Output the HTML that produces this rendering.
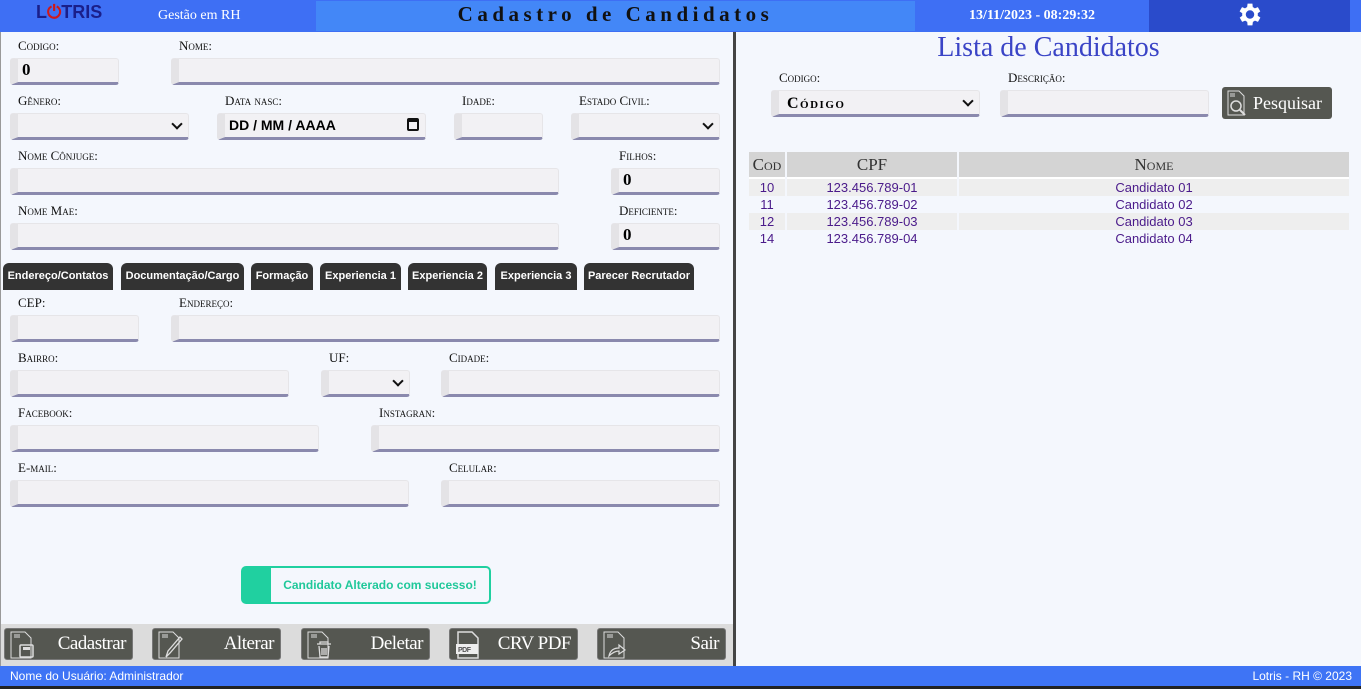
<!DOCTYPE html>
<html><head><meta charset="utf-8"><style>
*{box-sizing:border-box;margin:0;padding:0}
body{width:1361px;height:689px;overflow:hidden;background:#f4f7fd;font-family:"Liberation Serif",serif;position:relative}
.a{position:absolute}
.hdr{left:0;top:0;width:1361px;height:32px;background:#3e6ff4}
.lbl{position:absolute;font-size:13px;font-variant:small-caps;color:#111}
.in{position:absolute;height:27px;background:#f2f1f4;border:1px solid #e6e5e8;border-left:8px solid #e4e3e6;border-bottom:3px solid #8a89ad;border-radius:3px;font-weight:bold;font-size:17px;padding-left:4px;line-height:22px}
.sel::after{content:"";position:absolute;right:7px;top:6px;width:6px;height:6px;border-right:2px solid #111;border-bottom:2px solid #111;transform:rotate(45deg)}
.tab{position:absolute;top:263px;height:27px;background:#333;color:#fff;font-family:"Liberation Sans Narrow","Liberation Sans",sans-serif;font-weight:bold;font-size:11px;line-height:27px;text-align:center;border-radius:6px 6px 0 0}
.btn{position:absolute;top:628px;width:129px;height:32px;background:#555751;border-radius:3px;border:1px solid #777;color:#fff;font-family:"Liberation Serif",serif;font-size:19px;line-height:30px;text-align:right;padding-right:6px;letter-spacing:-0.5px}
.btn svg{position:absolute;left:4px;top:2px}
table{border-collapse:separate;border-spacing:2px 0;font-family:"Liberation Sans Narrow","Liberation Sans",sans-serif;font-size:13px;color:#4a1a8a}
td{text-align:center;height:17px;line-height:17px}
th{background:#d4d4d4;font-family:"Liberation Serif",serif;font-variant:small-caps;font-weight:normal;font-size:17px;color:#333;height:27px;border-bottom:2px solid #fff}
tr.o td{background:#eeeeee}
</style></head><body>
<div class="a hdr"></div>
<div class="a" style="left:316px;top:1px;width:599px;height:30px;background:#4387f7"></div>
<div class="a" style="left:1149px;top:0;width:201px;height:32px;background:#2a4bcb"></div>
<div class="a" style="left:36px;top:2px;font-family:'Liberation Sans',sans-serif;font-weight:bold;font-size:18px;color:#1a1f8a">L<span style="color:#d01818">⏻</span>TRIS</div>
<div class="a" style="left:158px;top:8px;font-size:14px;color:#fff">Gestão em RH</div>
<div class="a" style="left:316px;top:2px;width:599px;text-align:center;font-size:21px;font-weight:bold;letter-spacing:4.5px;color:#111">Cadastro de Candidatos</div>
<div class="a" style="left:915px;top:8px;width:234px;text-align:center;font-size:14px;font-weight:bold;color:#fff">13/11/2023 - 08:29:32</div>
<svg class="a" style="left:1235px;top:0" width="30" height="29" viewBox="0 0 24 24"><path fill="#fff" d="M19.4 13a7.5 7.5 0 000-2l2.1-1.6-2-3.5-2.5 1a7.6 7.6 0 00-1.7-1L15 3h-4l-.4 2.9a7.6 7.6 0 00-1.7 1l-2.5-1-2 3.5L6.6 11a7.5 7.5 0 000 2l-2.1 1.6 2 3.5 2.5-1c.5.4 1.1.7 1.7 1L11 21h4l.4-2.9c.6-.3 1.2-.6 1.7-1l2.5 1 2-3.5zM13 15.5a3.5 3.5 0 110-7 3.5 3.5 0 010 7z" transform="translate(-1 0)"/></svg>
<div class="a" style="left:733px;top:32px;width:3px;height:634px;background:#444"></div>
<div class="a" style="left:0;top:32px;width:1px;height:634px;background:#999"></div>

<div class="lbl" style="left:18px;top:38px">Codigo:</div><div class="in" style="left:10px;top:58px;width:109px">0</div>
<div class="lbl" style="left:179px;top:38px">Nome:</div><div class="in" style="left:171px;top:58px;width:549px"></div>
<div class="lbl" style="left:18px;top:93px">Gênero:</div><div class="in sel" style="left:10px;top:113px;width:179px"></div>
<div class="lbl" style="left:225px;top:93px">Data nasc:</div><div class="in" style="left:217px;top:113px;width:209px;font-family:'Liberation Sans',sans-serif;font-size:14px">DD / MM / AAAA<span style="position:absolute;right:6px;top:4px;width:12px;height:13px;border:2px solid #111;border-top-width:4px;border-radius:2px"></span></div>
<div class="lbl" style="left:462px;top:93px">Idade:</div><div class="in" style="left:454px;top:113px;width:89px"></div>
<div class="lbl" style="left:579px;top:93px">Estado Civil:</div><div class="in sel" style="left:571px;top:113px;width:149px"></div>
<div class="lbl" style="left:18px;top:148px">Nome Cônjuge:</div><div class="in" style="left:10px;top:168px;width:549px"></div>
<div class="lbl" style="left:619px;top:148px">Filhos:</div><div class="in" style="left:611px;top:168px;width:109px">0</div>
<div class="lbl" style="left:18px;top:203px">Nome Mae:</div><div class="in" style="left:10px;top:223px;width:549px"></div>
<div class="lbl" style="left:619px;top:203px">Deficiente:</div><div class="in" style="left:611px;top:223px;width:109px">0</div>

<div class="tab" style="left:3px;width:110px">Endereço/Contatos</div>
<div class="tab" style="left:121px;width:123px">Documentação/Cargo</div>
<div class="tab" style="left:251px;width:62px">Formação</div>
<div class="tab" style="left:320px;width:81px">Experiencia 1</div>
<div class="tab" style="left:408px;width:79px">Experiencia 2</div>
<div class="tab" style="left:495px;width:82px">Experiencia 3</div>
<div class="tab" style="left:584px;width:110px">Parecer Recrutador</div>

<div class="lbl" style="left:18px;top:295px">CEP:</div><div class="in" style="left:10px;top:315px;width:129px"></div>
<div class="lbl" style="left:179px;top:295px">Endereço:</div><div class="in" style="left:171px;top:315px;width:549px"></div>
<div class="lbl" style="left:18px;top:350px">Bairro:</div><div class="in" style="left:10px;top:370px;width:279px"></div>
<div class="lbl" style="left:329px;top:350px">UF:</div><div class="in sel" style="left:321px;top:370px;width:89px"></div>
<div class="lbl" style="left:449px;top:350px">Cidade:</div><div class="in" style="left:441px;top:370px;width:279px"></div>
<div class="lbl" style="left:18px;top:405px">Facebook:</div><div class="in" style="left:10px;top:425px;width:309px"></div>
<div class="lbl" style="left:379px;top:405px">Instagran:</div><div class="in" style="left:371px;top:425px;width:349px"></div>
<div class="lbl" style="left:18px;top:460px">E-mail:</div><div class="in" style="left:10px;top:480px;width:399px"></div>
<div class="lbl" style="left:449px;top:460px">Celular:</div><div class="in" style="left:441px;top:480px;width:279px"></div>

<div class="a" style="left:241px;top:566px;width:250px;height:38px;border:2px solid #20d0a0;border-left:30px solid #20d0a0;border-radius:5px;color:#20c89a;font-family:'Liberation Sans',sans-serif;font-weight:bold;font-size:12px;line-height:34px;text-align:center">Candidato Alterado com sucesso!</div>

<div class="a" style="left:1px;top:624px;width:732px;height:42px;background:#dcdcdc"></div>
<div class="btn" style="left:4px"><svg width="34" height="28" viewBox="0 0 34 28"><path d="M2 1h14l6 6v20H2z" fill="none" stroke="#ddd"/><path d="M5 4h6M5 6h6" stroke="#ddd"/><rect x="11" y="14" width="13" height="12" rx="1" fill="none" stroke="#ddd" stroke-width="1.5"/><rect x="14" y="16" width="7" height="3" fill="#ddd"/></svg>Cadastrar</div>
<div class="btn" style="left:152px"><svg width="34" height="28" viewBox="0 0 34 28"><path d="M2 1h14l6 6v20H2z" fill="none" stroke="#ddd"/><path d="M5 4h6M5 6h6" stroke="#ddd"/><path d="M9 26l2-6 12-14 2 2-12 14z" fill="none" stroke="#ddd" stroke-width="1.3"/></svg>Alterar</div>
<div class="btn" style="left:301px"><svg width="34" height="28" viewBox="0 0 34 28"><path d="M2 1h14l6 6v20H2z" fill="none" stroke="#ddd"/><path d="M5 4h6M5 6h6" stroke="#ddd"/><path d="M11 13h14M14 13v-2h8v2M13 15l1 11h8l1-11M16 17v7M18 17v7M20 17v7" fill="none" stroke="#ddd" stroke-width="1.3"/></svg>Deletar</div>
<div class="btn" style="left:449px"><svg width="34" height="28" viewBox="0 0 34 28"><path d="M4 1h14l6 6v20H4z" fill="none" stroke="#ddd" stroke-width="1.5"/><rect x="2" y="13" width="22" height="10" fill="#eee"/><text x="4" y="21" font-size="7" font-family="Liberation Sans" font-weight="bold" fill="#555">PDF</text></svg>CRV PDF</div>
<div class="btn" style="left:597px"><svg width="34" height="28" viewBox="0 0 34 28"><path d="M2 1h14l6 6v20H2z" fill="none" stroke="#ddd"/><path d="M5 4h6M5 6h6" stroke="#ddd"/><path d="M7 25c1-5 4-8 10-8v-3l6 5-6 4v-3c-4 0-7 2-10 5z" fill="none" stroke="#ddd" stroke-width="1.2"/></svg>Sair</div>

<div class="a" style="left:0;top:666px;width:1361px;height:20px;background:#3e74f5"></div>
<div class="a" style="left:0;top:686px;width:1361px;height:3px;background:#222"></div>
<div class="a" style="left:10px;top:669px;font-family:'Liberation Sans Narrow','Liberation Sans',sans-serif;font-size:12px;color:#fff">Nome do Usuário: Administrador</div>
<div class="a" style="right:9px;top:669px;font-family:'Liberation Sans Narrow','Liberation Sans',sans-serif;font-size:12px;color:#fff">Lotris - RH © 2023</div>

<div class="a" style="left:736px;top:32px;width:625px;text-align:center;font-size:28px;color:#3a44c6">Lista de Candidatos</div>
<div class="lbl" style="left:779px;top:70px">Codigo:</div>
<div class="in sel" style="left:771px;top:90px;width:209px;font-variant:small-caps;font-size:16px;letter-spacing:1.5px;line-height:26px;padding-left:8px">Código</div>
<div class="lbl" style="left:1008px;top:70px">Descrição:</div>
<div class="in" style="left:1000px;top:90px;width:209px"></div>
<div class="a" style="left:1222px;top:87px;width:110px;height:32px;background:#555751;border-radius:3px;color:#fff;font-size:18px;line-height:32px;padding-left:31px"><svg style="position:absolute;left:4px;top:3px" width="24" height="27" viewBox="0 0 24 27"><path d="M2 1h11l5 5v19H2z" fill="none" stroke="#ddd"/><path d="M4 4h5M4 6h5" stroke="#ddd"/><circle cx="10" cy="16" r="5" fill="none" stroke="#ddd" stroke-width="1.5"/><path d="M14 20l5 5" stroke="#ddd" stroke-width="2"/></svg>Pesquisar</div>

<table class="a" style="left:747px;top:152px;width:604px">
<tr><th style="width:36px">Cod</th><th style="width:170px">CPF</th><th>Nome</th></tr>
<tr class="o"><td>10</td><td>123.456.789-01</td><td>Candidato 01</td></tr>
<tr><td>11</td><td>123.456.789-02</td><td>Candidato 02</td></tr>
<tr class="o"><td>12</td><td>123.456.789-03</td><td>Candidato 03</td></tr>
<tr><td>14</td><td>123.456.789-04</td><td>Candidato 04</td></tr>
</table>
</body></html>
